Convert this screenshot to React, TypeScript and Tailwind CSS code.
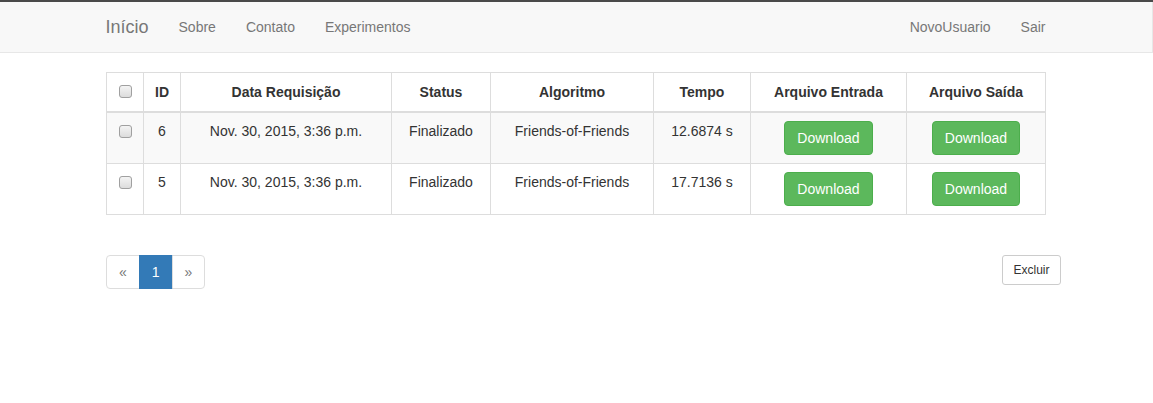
import React from 'react';

interface Row {
  id: number;
  date: string;
  status: string;
  algorithm: string;
  time: string;
}

const rows: Row[] = [
  { id: 6, date: 'Nov. 30, 2015, 3:36 p.m.', status: 'Finalizado', algorithm: 'Friends-of-Friends', time: '12.6874 s' },
  { id: 5, date: 'Nov. 30, 2015, 3:36 p.m.', status: 'Finalizado', algorithm: 'Friends-of-Friends', time: '17.7136 s' },
];

const Checkbox = () => (
  <input
    type="checkbox"
    className="appearance-none block mx-auto mt-[4px] w-[13px] h-[13px] rounded-[3px] border border-[#a0a0a0] bg-gradient-to-b from-[#f4f4f4] to-[#dcdcdc]"
  />
);

const DownloadButton = () => (
  <button className="px-[12px] py-[6px] text-[14px] leading-[20px] text-white bg-[#5cb85c] border border-[#4cae4c] rounded-[4px]">
    Download
  </button>
);

const cell = 'border border-[#ddd] p-[8px] align-top text-center leading-[20px]';

export default function App() {
  return (
    <div className="min-h-[403px] bg-white text-[14px] text-[#333]" style={{ fontFamily: '"Liberation Sans", Arial, sans-serif' }}>
      {/* Navbar */}
      <div className="border-t-2 border-[#4a4a4a]">
        <nav className="h-[51px] bg-[#f8f8f8] border-b border-r border-[#e7e7e7]">
          <div className="w-[971px] pr-px mx-auto flex items-center justify-between h-[50px]">
            <div className="flex items-center">
              <a className="px-[15px] text-[18px] leading-[20px] text-[#777]">Início</a>
              <a className="px-[15px] leading-[20px] text-[#777]">Sobre</a>
              <a className="px-[15px] leading-[20px] text-[#777]">Contato</a>
              <a className="px-[15px] leading-[20px] text-[#777]">Experimentos</a>
            </div>
            <div className="flex items-center">
              <a className="px-[15px] leading-[20px] text-[#777]">NovoUsuario</a>
              <a className="px-[15px] leading-[20px] text-[#777]">Sair</a>
            </div>
          </div>
        </nav>
      </div>

      <div className="w-[971px] mx-auto pl-[15px] pr-[16px] pt-[19px]">
        <table className="w-[939px] table-fixed border-collapse border border-[#ddd]">
          <colgroup>
            <col className="w-[37px]" />
            <col className="w-[37px]" />
            <col className="w-[211px]" />
            <col className="w-[99px]" />
            <col className="w-[163px]" />
            <col className="w-[97px]" />
            <col className="w-[156px]" />
            <col className="w-[139px]" />
          </colgroup>
          <thead>
            <tr>
              <th className="border border-[#ddd] border-b-2 px-[8px] pt-[8px] pb-[10px] align-top leading-[20px]">
                <Checkbox />
              </th>
              {['ID', 'Data Requisição', 'Status', 'Algoritmo', 'Tempo', 'Arquivo Entrada', 'Arquivo Saída'].map((h) => (
                <th key={h} className="border border-[#ddd] border-b-2 px-[8px] pt-[9px] pb-[9px] align-bottom text-center font-bold leading-[20px]">
                  {h}
                </th>
              ))}
            </tr>
          </thead>
          <tbody>
            {rows.map((r, i) => (
              <tr key={r.id} className={i % 2 === 0 ? 'bg-[#f9f9f9]' : 'bg-white'}>
                <td className={cell}>
                  <Checkbox />
                </td>
                <td className={cell}>{r.id}</td>
                <td className={cell}>{r.date}</td>
                <td className={cell}>{r.status}</td>
                <td className={cell}>{r.algorithm}</td>
                <td className={cell}>{r.time}</td>
                <td className={cell}>
                  <DownloadButton />
                </td>
                <td className={cell}>
                  <DownloadButton />
                </td>
              </tr>
            ))}
          </tbody>
        </table>

        <div className="flex items-start justify-between mt-[40px] -mr-[15px]">
          <ul className="flex">
            <li>
              <a className="block px-[12px] py-[6px] leading-[20px] text-[#777] bg-white border border-[#ddd] rounded-l-[4px]">«</a>
            </li>
            <li>
              <a className="block px-[12px] py-[6px] leading-[20px] text-white bg-[#337ab7] border border-[#337ab7] -ml-px">1</a>
            </li>
            <li>
              <a className="block px-[12px] py-[6px] leading-[20px] text-[#777] bg-white border border-[#ddd] rounded-r-[4px] -ml-px">»</a>
            </li>
          </ul>
          <button className="w-[59px] py-[5px] text-[12px] leading-[18px] text-[#333] bg-white border border-[#ccc] rounded-[3px]">
            Excluir
          </button>
        </div>
      </div>
    </div>
  );
}
